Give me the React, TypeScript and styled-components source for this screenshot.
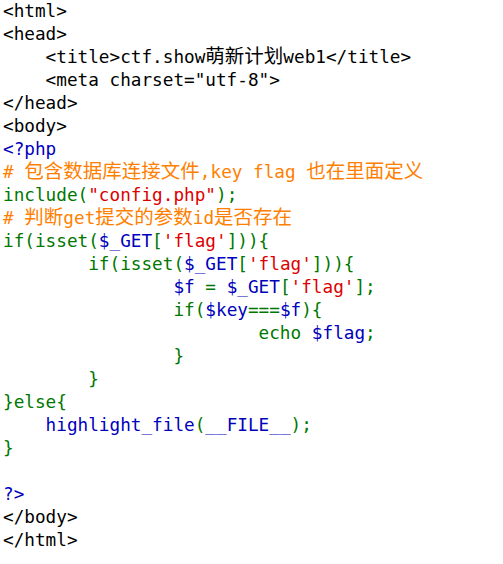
import React from "react";
import styled, { createGlobalStyle } from "styled-components";

const GlobalStyle = createGlobalStyle`
  html, body {
    margin: 0;
    padding: 0;
    background: #ffffff;
  }
`;

type Kind = "html" | "default" | "keyword" | "string" | "comment";

const colors: Record<Kind, string> = {
  html: "#000000",
  default: "#0000BB",
  keyword: "#007700",
  string: "#DD0000",
  comment: "#FF8000",
};

const Code = styled.code`
  display: flex;
  flex-direction: column;
  padding: 0 0 0 3px;
  font-family: "DejaVu Sans Mono", "Liberation Mono", monospace;
  font-size: 17.7px;
  white-space: pre;
`;

const Line = styled.div`
  height: 23px;
  line-height: 23px;
`;

const Token = styled.span<{ $kind: Kind }>`
  color: ${(p) => colors[p.$kind]};
`;

const Cjk = styled.span`
  font-family: "Noto Sans CJK SC", sans-serif;
  font-size: 19.5px;
  line-height: 18px;
  font-weight: 400;
`;

type Tok = [Kind, string];

const lines: Tok[][] = [
  [["html", "<html>"]],
  [["html", "<head>"]],
  [["html", "    <title>ctf.show萌新计划web1</title>"]],
  [["html", '    <meta charset="utf-8">']],
  [["html", "</head>"]],
  [["html", "<body>"]],
  [["default", "<?php"]],
  [["comment", "# 包含数据库连接文件,key flag 也在里面定义"]],
  [
    ["keyword", "include("],
    ["string", '"config.php"'],
    ["keyword", ");"],
  ],
  [["comment", "# 判断get提交的参数id是否存在"]],
  [
    ["keyword", "if(isset("],
    ["default", "$_GET"],
    ["keyword", "["],
    ["string", "'flag'"],
    ["keyword", "])){"],
  ],
  [
    ["keyword", "        if(isset("],
    ["default", "$_GET"],
    ["keyword", "["],
    ["string", "'flag'"],
    ["keyword", "])){"],
  ],
  [
    ["default", "                $f "],
    ["keyword", "= "],
    ["default", "$_GET"],
    ["keyword", "["],
    ["string", "'flag'"],
    ["keyword", "];"],
  ],
  [
    ["keyword", "                if("],
    ["default", "$key"],
    ["keyword", "==="],
    ["default", "$f"],
    ["keyword", "){"],
  ],
  [
    ["keyword", "                        echo "],
    ["default", "$flag"],
    ["keyword", ";"],
  ],
  [["keyword", "                }"]],
  [["keyword", "        }"]],
  [["keyword", "}else{"]],
  [
    ["default", "    highlight_file"],
    ["keyword", "("],
    ["default", "__FILE__"],
    ["keyword", ");"],
  ],
  [["keyword", "}"]],
  [],
  [["default", "?>"]],
  [["html", "</body>"]],
  [["html", "</html>"]],
];

const cjkRe = /([\u3400-\u9fff]+)/;

function renderText(text: string) {
  return text.split(cjkRe).map((part, i) =>
    i % 2 === 1 ? <Cjk key={i}>{part}</Cjk> : part
  );
}

export default function App() {
  return (
    <>
      <GlobalStyle />
      <Code>
        {lines.map((toks, i) => (
          <Line key={i}>
            {toks.map(([kind, text], j) => (
              <Token key={j} $kind={kind}>
                {renderText(text)}
              </Token>
            ))}
          </Line>
        ))}
      </Code>
    </>
  );
}
